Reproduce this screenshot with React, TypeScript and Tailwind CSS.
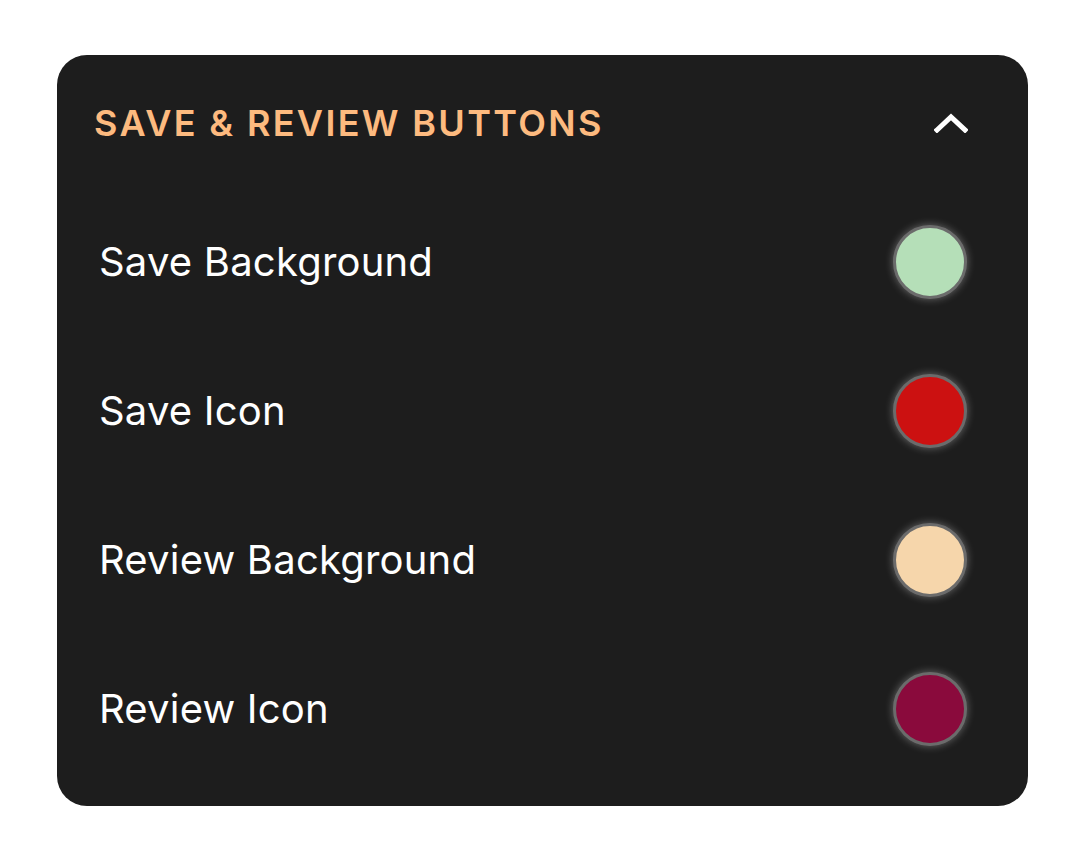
import React from "react";

const rows = [
  { label: "Save Background", color: "bg-[#b5dfb8]" },
  { label: "Save Icon", color: "bg-[#cc1111]" },
  { label: "Review Background", color: "bg-[#f6d6ab]" },
  { label: "Review Icon", color: "bg-[#8a0a3c]" },
];

export default function App() {
  return (
    <div className="w-[1078px] h-[851px] bg-white pt-[55px] pl-[57px]" style={{ fontFamily: "Inter, 'Noto Sans', sans-serif" }}>
      <div className="w-[971px] h-[751px] bg-[#1d1d1d] rounded-[30px] pt-[36px] flex flex-col">
        <div className="h-[64px] flex items-center justify-between pl-[37px] pr-[60px]">
          <span className="text-[#fdba7f] font-semibold text-[36px] tracking-[0.065em] leading-none">
            SAVE &amp; REVIEW BUTTONS
          </span>
          <svg width="34" height="20" viewBox="0 0 34 20" fill="none">
            <path d="M3 17 L17 4 L31 17" stroke="white" strokeWidth="5" strokeLinecap="square" strokeLinejoin="miter" />
          </svg>
        </div>
        <div className="mt-[32px] flex flex-col">
          {rows.map((r) => (
            <div key={r.label} className="h-[149px] flex items-center justify-between pl-[42px] pr-[61px]">
              <span className="text-white text-[40px] tracking-[0.005em] leading-none">{r.label}</span>
              <div className={`w-[74px] h-[74px] rounded-full border-[3px] border-[#6b6b6b] ${r.color} shadow-[0_0_8px_rgba(255,255,255,0.35)]`} />
            </div>
          ))}
        </div>
      </div>
    </div>
  );
}
